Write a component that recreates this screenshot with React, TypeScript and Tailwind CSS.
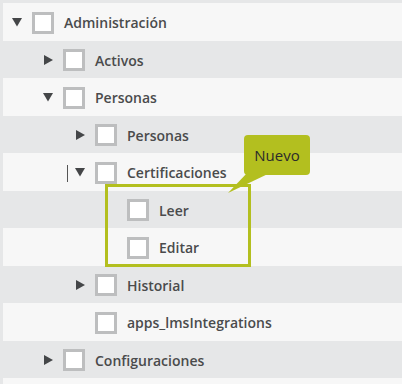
import React from 'react';

type Arrow = 'down' | 'right' | null;

interface Node {
    label: string;
    level: 0 | 1 | 2 | 3;
    arrow: Arrow;
    cursor?: boolean;
}

const nodes: Node[] = [
    { label: 'Administración', level: 0, arrow: 'down' },
    { label: 'Activos', level: 1, arrow: 'right' },
    { label: 'Personas', level: 1, arrow: 'down' },
    { label: 'Personas', level: 2, arrow: 'right' },
    { label: 'Certificaciones', level: 2, arrow: 'down', cursor: true },
    { label: 'Leer', level: 3, arrow: null },
    { label: 'Editar', level: 3, arrow: null },
    { label: 'Historial', level: 2, arrow: 'right' },
    { label: 'apps_lmsIntegrations', level: 2, arrow: null },
    { label: 'Configuraciones', level: 1, arrow: 'right' },
];

const indent = ['pl-[9px]', 'pl-[40px]', 'pl-[72px]', 'pl-[104px]'];

function Caret({ dir }: { dir: Arrow }) {
    if (dir === 'down') {
        return (
            <svg width="10" height="9" viewBox="0 0 10 9" className="mt-[-1px]">
                <polygon points="0,0 10,0 5,8.5" fill="#444648" />
            </svg>
        );
    }
    if (dir === 'right') {
        return (
            <svg width="9" height="10" viewBox="0 0 9 10" className="ml-[1px]">
                <polygon points="0,0 9,5 0,10" fill="#444648" />
            </svg>
        );
    }
    return null;
}

function TreeRow({ node, index }: { node: Node; index: number }) {
    const bg = index % 2 === 0 ? 'bg-[#f7f7f7]' : 'bg-[#e6e7e8]';
    return (
        <div className={`relative flex h-[37.5px] items-center pt-[2px] ${bg} ${indent[node.level]}`}>
            {node.cursor && <div className="absolute left-[64px] top-[12px] h-[17px] w-[1px] bg-[#555]" />}
            <div className="flex w-[20px] items-center">
                <Caret dir={node.arrow} />
            </div>
            <div className="h-[22px] w-[22px] shrink-0 border-[3px] border-[#bdbebf] bg-white" />
            <span className="ml-[10px] text-[14px] font-semibold text-[#4a4b4c]">{node.label}</span>
        </div>
    );
}

export default function App() {
    return (
        <div
            className="relative h-[384px] w-[402px] overflow-hidden bg-[#e6e7e8] pl-[3px] pt-[3px]"
            style={{ fontFamily: '"Open Sans", "Liberation Sans", sans-serif' }}
        >
            {nodes.map((n, i) => (
                <TreeRow key={i} node={n} index={i} />
            ))}
            <div className="h-[40px] bg-[#f7f7f7]" />

            {/* Highlight box */}
            <div className="absolute left-[105px] top-[184px] h-[83px] w-[146px] border-[3px] border-[#b3bf1f]" />

            {/* Tooltip */}
            <svg className="absolute left-[226px] top-[172px]" width="50" height="24" viewBox="0 0 50 24">
                <polygon points="22,0 46,0 2,21" fill="#b3bf1f" />
            </svg>
            <div className="absolute left-[244px] top-[135px] flex h-[40px] w-[66px] items-center justify-center rounded-[4px] bg-[#b3bf1f] text-[15px] text-[#2b2b2b]">
                Nuevo
            </div>
        </div>
    );
}
